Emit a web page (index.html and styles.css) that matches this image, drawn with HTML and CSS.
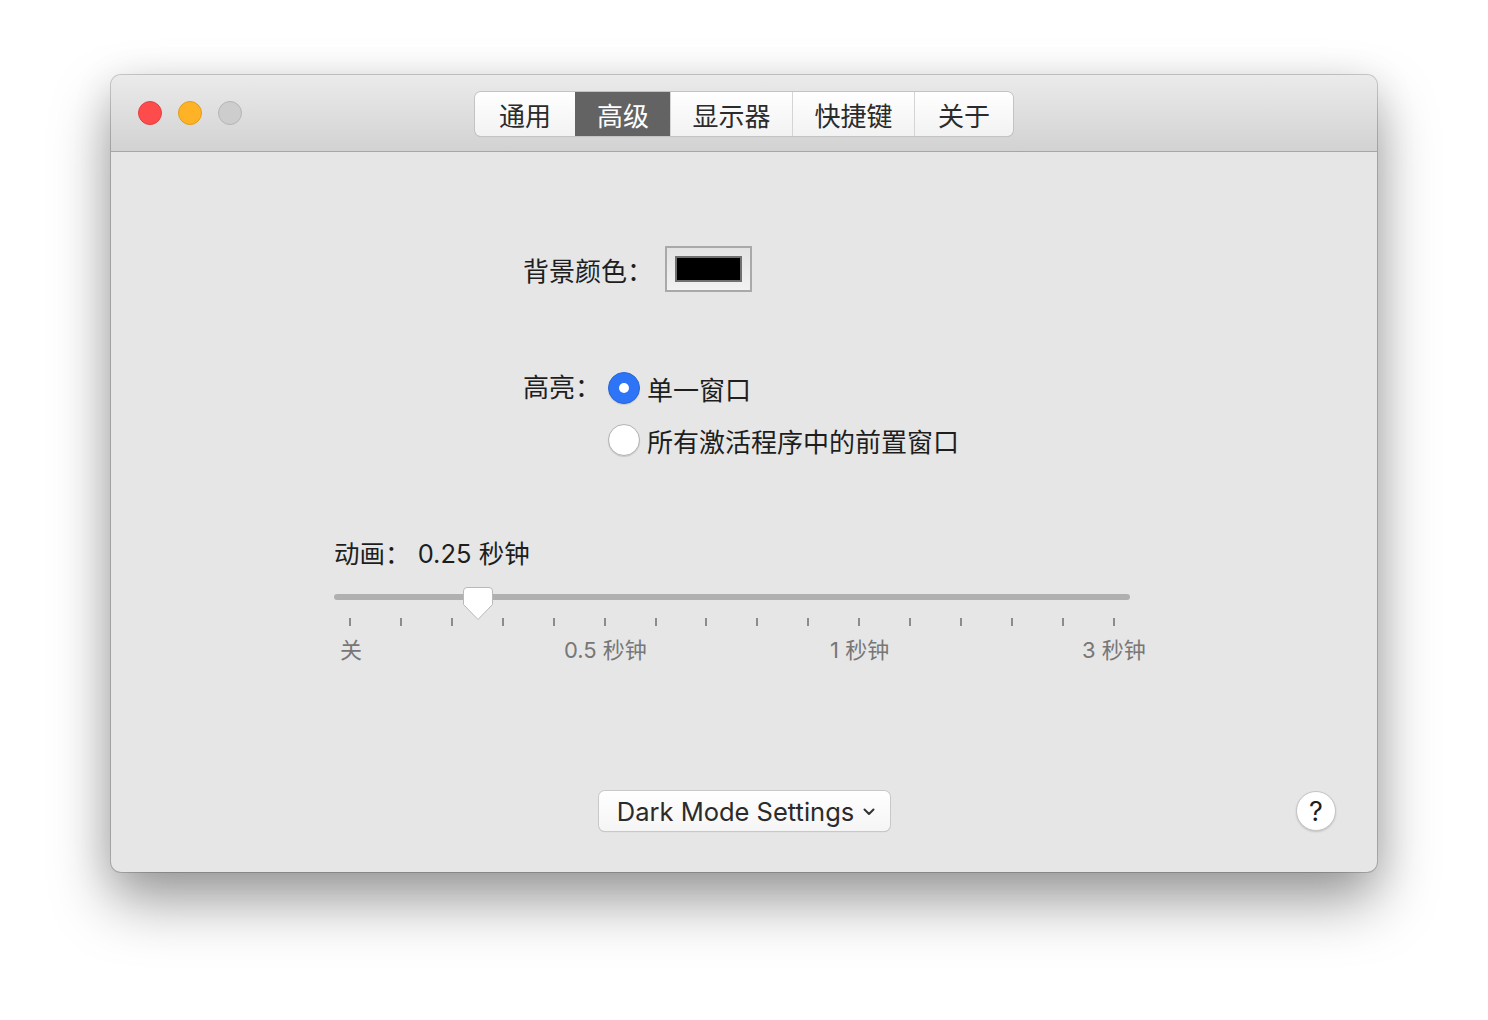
FILE: index.html
```html
<!DOCTYPE html>
<html lang="zh-CN">
<head>
<meta charset="utf-8">
<title>偏好设置</title>
<link rel="stylesheet" href="styles.css">
</head>
<body>
<div class="window">
  <div class="titlebar">
    <div class="lights">
      <span class="light red"></span>
      <span class="light yellow"></span>
      <span class="light gray"></span>
    </div>
    <div class="tabs">
      <div class="tab t1">通用</div>
      <div class="tab t2 active">高级</div>
      <div class="tab t3">显示器</div>
      <div class="tab t4">快捷键</div>
      <div class="tab t5">关于</div>
    </div>
  </div>
  <div class="content">
    <div class="row-color">
      <span class="label">背景颜色：</span>
      <div class="well"><div class="swatch"></div></div>
    </div>
    <div class="row-highlight">
      <span class="label hl-label">高亮：</span>
      <div class="radios">
        <div class="radio-item"><span class="radio on"></span><span>单一窗口</span></div>
        <div class="radio-item"><span class="radio"></span><span>所有激活程序中的前置窗口</span></div>
      </div>
    </div>
    <div class="anim">
      <div class="anim-label">动画：&nbsp;0.25 秒钟</div>
      <div class="slider">
        <div class="track"></div>
        <svg class="knob" width="32" height="36" viewBox="0 0 32 36">
          <path d="M5 1.5 H27 A3.5 3.5 0 0 1 30.5 5 V18.5 L16 33.5 L1.5 18.5 V5 A3.5 3.5 0 0 1 5 1.5 Z" fill="#ffffff" stroke="#b9b9b9" stroke-width="1"/>
        </svg>
        <div class="ticks">
          <i></i><i></i><i></i><i></i><i></i><i></i><i></i><i></i><i></i><i></i><i></i><i></i><i></i><i></i><i></i><i></i>
        </div>
        <div class="tick-labels">
          <span><b>关</b></span>
          <span><b>0.5 秒钟</b></span>
          <span><b>1 秒钟</b></span>
          <span><b>3 秒钟</b></span>
        </div>
      </div>
    </div>
    <div class="bottom">
      <div></div>
      <div class="popup">Dark Mode Settings
        <svg class="chev" width="12" height="8" viewBox="0 0 12 8"><path d="M1.5 1.5 L6 6 L10.5 1.5" fill="none" stroke="#333" stroke-width="2" stroke-linecap="round" stroke-linejoin="round"/></svg>
      </div>
      <div class="help">?</div>
    </div>
  </div>
</div>
</body>
</html>
```

FILE: styles.css
```css
html, body {
  margin: 0;
  padding: 0;
  background: #ffffff;
}
body {
  width: 1488px;
  height: 1020px;
  overflow: hidden;
  font-family: Inter, "Noto Sans CJK SC", sans-serif;
  color: #1e1e1e;
}
.window {
  margin: 75px 0 0 111px;
  width: 1266px;
  height: 797px;
  border-radius: 10px;
  background: #e6e6e6;
  box-shadow: 0 30px 60px rgba(0,0,0,0.36), 0 8px 40px rgba(0,0,0,0.12), 0 0 0 1px rgba(0,0,0,0.18);
  display: flex;
  flex-direction: column;
  overflow: hidden;
}
.titlebar {
  height: 76px;
  flex: none;
  background: linear-gradient(#ebebeb, #d2d2d2);
  border-bottom: 1px solid #a6a6a6;
  display: flex;
  align-items: center;
  position: relative;
}
.lights {
  display: flex;
  gap: 16px;
  margin-left: 27px;
}
.light {
  width: 24px;
  height: 24px;
  border-radius: 50%;
  box-sizing: border-box;
}
.red { background: #fd4c4b; border: 1px solid #e0413f; }
.yellow { background: #feb326; border: 1px solid #df9c1e; }
.gray { background: #cdcdcd; border: 1px solid #b5b5b5; }
.tabs {
  display: flex;
  margin-left: 233px;
  margin-top: 2px;
  height: 44px;
  border-radius: 6px;
  box-shadow: 0 0 0 1px #c3c3c3, 0 1px 1px rgba(0,0,0,0.12);
  background: linear-gradient(#ffffff, #f2f2f2);
  overflow: hidden;
}
.tab {
  display: flex;
  align-items: center;
  justify-content: center;
  font-size: 26px;
  color: #2b2b2b;
  border-left: 1px solid #d4d4d4;
  box-sizing: border-box;
}
.t1 { width: 100px; border-left: none; }
.t2 { width: 95px; }
.t3 { width: 122px; }
.t4 { width: 122px; }
.t5 { width: 99px; }
.tab.active {
  background: #636363;
  color: #ffffff;
  border-left-color: #636363;
}
.content {
  flex: 1;
  display: flex;
  flex-direction: column;
}
.label {
  font-size: 26px;
  color: #1e1e1e;
}
.row-color {
  margin: 94px 0 0 412px;
  height: 46px;
  display: flex;
  align-items: center;
}
.row-color .label { width: 142px; }
.well {
  width: 87px;
  height: 46px;
  box-sizing: border-box;
  border: 2px solid #a9a9a9;
  background: linear-gradient(#e3e3e3, #f2f2f2);
  display: flex;
  align-items: center;
  justify-content: center;
}
.swatch {
  width: 67px;
  height: 26px;
  box-sizing: border-box;
  background: #000;
  border: 2px solid #707070;
}
.row-highlight {
  margin: 80px 0 0 412px;
  display: flex;
  align-items: flex-start;
}
.hl-label {
  width: 85px;
  height: 32px;
  line-height: 32px;
}
.radios {
  display: flex;
  flex-direction: column;
  gap: 20px;
}
.radio-item {
  display: flex;
  align-items: center;
  gap: 7px;
  font-size: 26px;
  height: 32px;
  color: #1e1e1e;
}
.radio {
  width: 32px;
  height: 32px;
  border-radius: 50%;
  box-sizing: border-box;
  background: #fff;
  border: 1px solid #b2b2b2;
  box-shadow: 0 1px 1px rgba(0,0,0,0.12);
  position: relative;
}
.radio.on {
  background: #2e74f6;
  border-color: #2766d9;
}
.radio.on::after {
  content: "";
  position: absolute;
  left: 10px;
  top: 10px;
  width: 10px;
  height: 10px;
  border-radius: 50%;
  background: #fff;
}
.anim {
  margin: 82px 0 0 223px;
  width: 830px;
}
.anim-label {
  font-size: 25.5px;
  height: 32px;
  line-height: 32px;
  color: #1e1e1e;
}
.slider {
  position: relative;
  width: 796px;
  margin-top: 24px;
}
.track {
  height: 6px;
  border-radius: 3px;
  background: #b0b0b0;
}
.knob {
  position: absolute;
  left: 128px;
  top: -8px;
}
.ticks {
  margin: 18px 15px 0 15px;
  display: flex;
  justify-content: space-between;
}
.ticks i {
  width: 2px;
  height: 8px;
  background: #8c8c8c;
}
.tick-labels {
  margin: 9px 15px 0 16px;
  display: flex;
  justify-content: space-between;
  font-size: 22px;
  color: #777777;
}
.tick-labels span {
  width: 2px;
  display: flex;
  justify-content: center;
}
.tick-labels b {
  font-weight: normal;
  white-space: nowrap;
  line-height: 30px;
}
.bottom {
  margin-top: auto;
  margin-bottom: 41px;
  display: grid;
  grid-template-columns: 1fr auto 1fr;
  align-items: center;
  padding: 0 41px;
}
.popup {
  width: 291px;
  height: 40px;
  box-sizing: border-box;
  border-radius: 6px;
  background: linear-gradient(#ffffff, #f5f5f5);
  box-shadow: 0 0 0 1px #c8c8c8, 0 1px 1px rgba(0,0,0,0.2);
  font-size: 25.5px;
  color: #2b2b2b;
  display: flex;
  align-items: center;
  justify-content: center;
  gap: 9px;
  padding-left: 4px;
}
.chev { margin-top: 1px; }
.help {
  justify-self: end;
  width: 40px;
  height: 40px;
  box-sizing: border-box;
  border-radius: 50%;
  background: #ffffff;
  border: 1px solid #c4c4c4;
  box-shadow: 0 1px 2px rgba(0,0,0,0.15);
  display: flex;
  align-items: center;
  justify-content: center;
  font-size: 27px;
  color: #1e1e1e;
  font-weight: 400;
}
```
